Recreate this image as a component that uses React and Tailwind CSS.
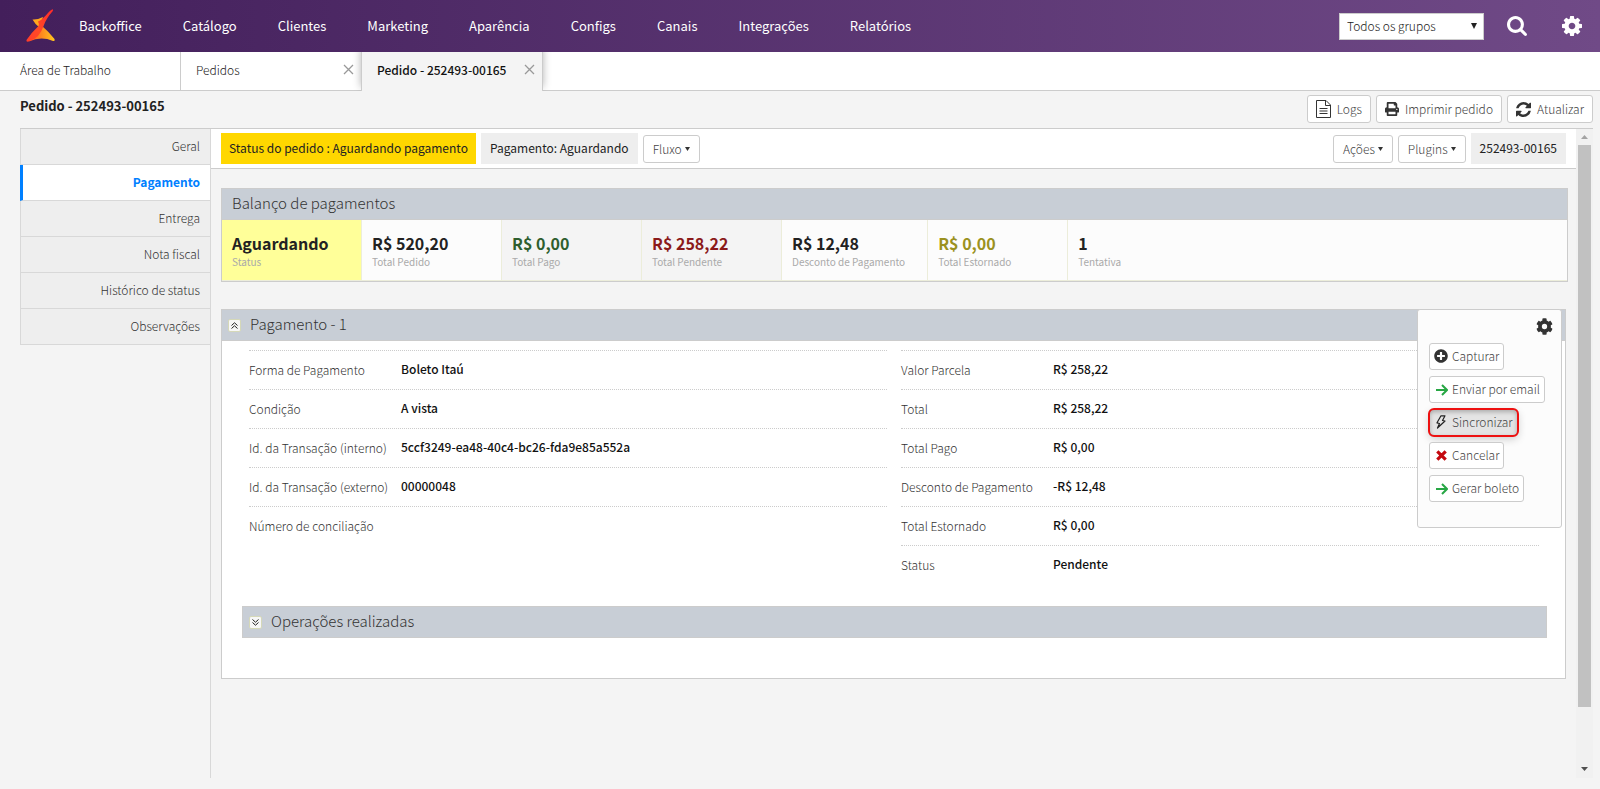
import React from "react";
import { FaPrint, FaPlusCircle } from "react-icons/fa";

const NAV = ["Backoffice", "Catálogo", "Clientes", "Marketing", "Aparência", "Configs", "Canais", "Integrações", "Relatórios"];

const SECTIONS = ["Geral", "Pagamento", "Entrega", "Nota fiscal", "Histórico de status", "Observações"];

const BALANCE = [
  { value: "Aguardando", label: "Status", cell: "bg-[#ffff99]", color: "text-[#222]" },
  { value: "R$ 520,20", label: "Total Pedido", cell: "", color: "text-[#222]" },
  { value: "R$ 0,00", label: "Total Pago", cell: "bg-[#f4f4f4]", color: "text-[#2e5e2e]" },
  { value: "R$ 258,22", label: "Total Pendente", cell: "bg-[#f4f4f4]", color: "text-[#8b1a1a]" },
  { value: "R$ 12,48", label: "Desconto de Pagamento", cell: "", color: "text-[#222]" },
  { value: "R$ 0,00", label: "Total Estornado", cell: "", color: "text-[#9b9120]" },
  { value: "1", label: "Tentativa", cell: "border-r-0", color: "text-[#222]" },
];

const DETAILS = [
  ["Forma de Pagamento", "Boleto Itaú"],
  ["Condição", "A vista"],
  ["Id. da Transação (interno)", "5ccf3249-ea48-40c4-bc26-fda9e85a552a"],
  ["Id. da Transação (externo)", "00000048"],
  ["Número de conciliação", ""],
];

const AMOUNTS = [
  ["Valor Parcela", "R$ 258,22"],
  ["Total", "R$ 258,22"],
  ["Total Pago", "R$ 0,00"],
  ["Desconto de Pagamento", "-R$ 12,48"],
  ["Total Estornado", "R$ 0,00"],
  ["Status", "Pendente"],
];

function Logo() {
  return (
    <svg viewBox="0 0 30 34" className="h-[34px] w-[30px]" aria-hidden="true">
      <defs>
        <linearGradient id="ribbon" x1="1" y1="0" x2="0" y2="1">
          <stop offset="0" stopColor="#ff2a2a" />
          <stop offset="0.6" stopColor="#ff4a26" />
          <stop offset="1" stopColor="#ff3b2a" />
        </linearGradient>
        <linearGradient id="base" x1="0" y1="0" x2="1" y2="0">
          <stop offset="0" stopColor="#ff4a26" />
          <stop offset="0.5" stopColor="#ff8a1e" />
          <stop offset="1" stopColor="#ffc81e" />
        </linearGradient>
      </defs>
      <path d="M6.500 10.500Q11 11 17 8L14 19Q9.500 16 6.500 10.500Z" fill="#ffa81e" />
      <path d="M15 16Q22 22 28.500 30Q29.500 32.500 27 32Q15 27 3 32.500Z" fill="url(#base)" />
      <path d="M26.500 .3Q24 1.500 22 4Q16 11 12 12.500Q13.500 15 12.500 17Q6 23 .5 31Q0 33 2 32.800Q8 31 12 27Q16 22 18 16Q20.500 9 26.800 2Q27.500 .5 26.500 .3Z" fill="url(#ribbon)" />
    </svg>
  );
}

function SearchIcon() {
  return (
    <svg viewBox="0 128 1664 1664" className="size-5" fill="currentColor" aria-hidden="true">
      <path d="M1152 832q0-185-131.500-316.500t-316.500-131.500-316.500 131.500-131.500 316.500 131.500 316.500 316.500 131.500 316.500-131.500 131.500-316.500zm512 832q0 52-38 90t-90 38q-54 0-90-38l-343-342q-179 124-399 124-143 0-273.500-55.500t-225-150-150-225-55.500-273.500 55.500-273.500 150-225 225-150 273.500-55.500 273.500 55.500 225 150 150 225 55.500 273.500q0 220-124 399l343 343q37 37 37 90z" />
    </svg>
  );
}

function CogIcon() {
  return (
    <svg viewBox="0 128 1536 1536" className="size-5" fill="currentColor" aria-hidden="true">
      <path d="M1024 896q0-106-75-181t-181-75-181 75-75 181 75 181 181 75 181-75 75-181zm512-109v222q0 12-8 23t-20 13l-185 28q-19 54-39 91 35 50 107 138 10 12 10 25t-9 23q-27 37-99 108t-94 71q-12 0-26-9l-138-108q-44 23-91 38-16 136-29 186-7 28-36 28h-222q-14 0-24.500-8.500t-11.500-21.500l-28-184q-49-16-90-37l-141 107q-10 9-25 9-14 0-25-11-126-114-165-168-7-10-7-23 0-12 8-23 15-21 51-66.500t54-70.500q-27-50-41-99l-183-27q-13-2-21-12.500t-8-23.500v-222q0-12 8-23t19-13l186-28q14-46 39-92-40-57-107-138-10-12-10-24 0-10 9-23 26-36 98.500-107.500t94.500-71.500q13 0 26 10l138 107q44-23 91-38 16-136 29-186 7-28 36-28h222q14 0 24.500 8.500t11.500 21.500l28 184q49 16 90 37l142-107q9-9 24-9 13 0 25 10 129 119 165 170 7 8 7 22 0 12-8 23-15 21-51 66.500t-54 70.500q26 50 41 98l183 28q13 2 21 12.500t8 23.500z" />
    </svg>
  );
}

function GearIcon() {
  return (
    <svg viewBox="0 0 512 512" className="size-[17px]" fill="currentColor" aria-hidden="true">
      <path d="M487 316l-42-25c4-23 4-47 0-70l42-25c5-3 7-9 6-14-11-36-30-68-55-95-4-4-10-5-15-2l-42 25c-18-16-39-28-61-35V26c0-6-4-11-9-12-36-8-74-8-110 0-5 1-9 6-9 12v49c-22 8-43 20-61 35L89 85c-5-3-11-2-15 2-25 27-44 59-55 95-2 5 1 11 6 14l42 25c-4 23-4 47 0 70l-42 25c-5 3-7 9-6 14 11 36 30 68 55 95 4 4 10 5 15 2l42-25c18 16 39 28 61 35v49c0 6 4 11 9 12 36 8 74 8 110 0 5-1 9-6 9-12v-49c22-8 43-20 61-35l42 25c5 3 11 2 15-2 25-27 44-59 55-95 2-5-1-11-6-14zM256 336a80 80 0 1 1 0-160 80 80 0 0 1 0 160z" />
    </svg>
  );
}

function FileIcon() {
  return (
    <svg viewBox="0 0 15 18" className="h-[18px] w-[15px]" fill="none" stroke="#333" aria-hidden="true">
      <path d="M.5 .5H10L14.500 5V17.500H.5Z" />
      <path d="M9.500 .5V5.500H14.500" />
      <path d="M3.500 8.500H11.500M3.500 11H11.500M3.500 13.500H11.500" />
    </svg>
  );
}

function RefreshIcon() {
  return (
    <svg viewBox="0 128 1536 1536" className="size-[15px]" fill="#333" aria-hidden="true">
      <path d="M1511 1056q0 5-1 7-64 268-268 434.500t-478 166.500q-146 0-282.500-55t-243.500-157l-129 129q-19 19-45 19t-45-19-19-45v-448q0-26 19-45t45-19h448q26 0 45 19t19 45-19 45l-137 137q71 66 161 102t187 36q134 0 250-65t186-179q11-17 53-117 8-23 30-23h192q13 0 22.500 9.500t9.500 22.500zm25-800v448q0 26-19 45t-45 19h-448q-26 0-45-19t-19-45 19-45l138-138q-148-137-349-137-134 0-250 65t-186 179q-11 17-53 117-8 23-30 23h-199q-13 0-22.500-9.500t-9.500-22.500v-7q65-268 270-434.500t480-166.500q146 0 284 55.500t245 156.500l130-129q19-19 45-19t45 19 19 45z" />
    </svg>
  );
}

function ArrowIcon() {
  return (
    <svg viewBox="0 0 14 14" className="size-[14px]" fill="none" stroke="#28a745" strokeWidth="2" aria-hidden="true">
      <path d="M2 8H13M8 3L13 8L8 13" />
    </svg>
  );
}

function BoltIcon() {
  return (
    <svg viewBox="0 0 10 14" className="h-[14px] w-[10px]" fill="none" stroke="#222" strokeWidth="1.200" strokeLinejoin="round" aria-hidden="true">
      <path d="M5 .8H9L6.500 5.500L9 6L1.500 13L3.500 8.500L1 7.800Z" />
    </svg>
  );
}

function CrossIcon() {
  return (
    <svg viewBox="0 0 11 11" className="size-[11px]" fill="none" stroke="#c4090f" strokeWidth="3.200" aria-hidden="true">
      <path d="M1.300 1.300L9.700 9.700M9.700 1.300L1.300 9.700" />
    </svg>
  );
}

function CloseIcon() {
  return (
    <svg viewBox="0 0 11 11" className="size-[11px]" fill="none" stroke="#999" strokeWidth="1.300" aria-hidden="true">
      <path d="M1 1L10 10M10 1L1 10" />
    </svg>
  );
}

function Caret() {
  return (
    <svg viewBox="0 0 5 4" className="h-1 w-[5px]" fill="#333" aria-hidden="true">
      <path d="M0 0H5L2.500 4Z" />
    </svg>
  );
}

function ToolButton({ children, className = "gap-[6px] px-2" }) {
  return (
    <button type="button" className={"flex h-7 items-center rounded-[3px] border border-[#ccc] bg-white font-light text-[#444] " + className}>
      {children}
    </button>
  );
}

function MenuButton({ children }) {
  return (
    <ToolButton className="gap-[3px] px-[9px]">
      {children}
      <Caret />
    </ToolButton>
  );
}

function Chip({ children, className = "bg-[#eee] px-[9px]" }) {
  return <span className={"flex h-[31px] items-center pb-px " + className}>{children}</span>;
}

function ActionButton({ icon, children, active }) {
  return (
    <button
      type="button"
      className={
        "flex h-[27px] items-center border pr-1 pb-px font-light text-[#444] " +
        (active
          ? "rounded-[5px] border-[#aaa] bg-[#e4e4e4] shadow-[inset_0_2px_4px_rgba(0,0,0,0.25),0_3px_8px_rgba(0,0,0,0.2)] outline-2 -outline-offset-1 outline-[#ee1111]"
          : "rounded-[3px] border-[#ccc] bg-white")
      }
    >
      <span className="flex w-[22px] items-center justify-center">{icon}</span>
      {children}
    </button>
  );
}

function PanelHeader({ children, className = "h-[31px] border-b" }) {
  return <div className={"flex items-center border-[#ccc] bg-[#c8ced6] pl-[6px] text-[15px] font-light text-[#333] " + className}>{children}</div>;
}

function ToggleTitle({ open, label, children }) {
  return (
    <>
      <button type="button" aria-label={label} aria-expanded={open} className="flex size-[13px] items-center justify-center rounded-xs border border-[#d5d8b8] bg-[#f7f7f7]">
        <svg viewBox="0 0 7 7" className="size-[7px]" fill="none" stroke="#222" aria-hidden="true">
          {open ? <path d="M.5 3.500L3.500 .8L6.500 3.500M.5 6.500L3.500 3.800L6.500 6.500" /> : <path d="M.5 .5L3.500 3.200L6.500 .5M.5 3.500L3.500 6.200L6.500 3.500" />}
        </svg>
      </button>
      <h2 className="pb-[3px] pl-[9px]">{children}</h2>
    </>
  );
}

function Rows({ items }) {
  return (
    <dl className="min-w-0 flex-1">
      {items.map(([label, value]) => (
        <div key={label} className="flex h-[39px] items-center border-t border-dotted border-[#ccc] pb-[2px]">
          <dt className="w-[152px] shrink-0 pt-[2px] font-light text-[#333]">{label}</dt>
          <dd className="font-medium text-[#111]">{value}</dd>
        </div>
      ))}
    </dl>
  );
}

export default function App() {
  return (
    <div className="flex min-h-screen flex-col bg-[#f4f4f4] font-['Noto_Sans_CJK_SC',sans-serif] text-[12px] leading-5 text-[#222]">
      <header className="flex h-[52px] items-center bg-linear-to-r from-[#431f5b] to-[#704a87] pr-[18px] pl-[26px] text-white">
        <a href="#inicio" aria-label="Início">
          <Logo />
        </a>
        <nav className="ml-[23px] flex gap-[41px] text-[13px]">
          {NAV.map((item) => (
            <a key={item} href={"#" + item}>{item}</a>
          ))}
        </nav>
        <div className="ml-auto flex items-center">
          <div className="relative">
            <select aria-label="Grupo" defaultValue="todos" className="h-[27px] w-[145px] appearance-none border border-[#ccc] bg-white pl-[7px] font-light text-[#222]">
              <option value="todos">Todos os grupos</option>
            </select>
            <svg viewBox="0 0 6 6" className="pointer-events-none absolute top-[10px] right-[7px] size-[6px]" fill="#222" aria-hidden="true">
              <path d="M0 0H6L3 6Z" />
            </svg>
          </div>
          <button type="button" aria-label="Buscar" className="ml-[23px]"><SearchIcon /></button>
          <button type="button" aria-label="Configurações" className="ml-[35px]"><CogIcon /></button>
        </div>
      </header>

      <div className="flex h-[39px] border-b border-[#ccc] bg-white">
        <a href="#area" className="flex w-[181px] items-center border-r border-[#ccc] pb-[2px] pl-5 font-light">Área de Trabalho</a>
        <div className="flex w-[180px] items-center justify-between pr-[7px] pb-[2px] pl-[15px]">
          <a href="#pedidos" className="font-light">Pedidos</a>
          <button type="button" aria-label="Fechar Pedidos" className="pb-[2px]"><CloseIcon /></button>
        </div>
        <div className="-mb-px flex w-[182px] items-center justify-between border-x border-[#ccc] bg-[#f4f4f4] pr-[7px] pb-[3px] pl-[15px] shadow-[0_-4px_8px_rgba(0,0,0,0.3)] [clip-path:inset(0_-12px_0_-12px)]">
          <a href="#pedido" className="font-medium text-[#111]">Pedido - 252493-00165</a>
          <button type="button" aria-label="Fechar Pedido" className="pb-[2px]"><CloseIcon /></button>
        </div>
      </div>

      <main className="flex flex-1 flex-col pr-[7px] pb-[11px] pl-5">
        <div className="flex h-[37px] items-start justify-between pt-1">
          <h1 className="pt-px text-[13px] font-bold">Pedido - 252493-00165</h1>
          <div className="flex gap-[5px]">
            <ToolButton><FileIcon />Logs</ToolButton>
            <ToolButton><FaPrint className="size-[14px] text-[#333]" />Imprimir pedido</ToolButton>
            <ToolButton><RefreshIcon />Atualizar</ToolButton>
          </div>
        </div>

        <div className="flex flex-1 border-t border-[#ccc]">
          <nav className="flex w-[191px] shrink-0 flex-col border-r border-[#d8d8d8]">
            {SECTIONS.map((name) => (
              <a
                key={name}
                href={"#" + name}
                className={
                  "flex h-9 items-center justify-end border-b border-[#d8d8d8] pr-[10px] pb-[2px] " +
                  (name === "Pagamento" ? "border-l-3 border-l-[#0080ff] bg-white font-bold text-[#0080ff]" : "border-l bg-[#eee] font-light text-[#333]")
                }
              >
                {name}
              </a>
            ))}
          </nav>

          <div className="flex min-w-0 flex-1 flex-col">
            <div className="flex h-10 items-center gap-[5px] border-b border-[#ccc] bg-white px-[10px]">
              <Chip className="bg-[#ffd700] px-2">Status do pedido : Aguardando pagamento</Chip>
              <Chip>Pagamento: Aguardando</Chip>
              <MenuButton>Fluxo</MenuButton>
              <div className="ml-auto flex items-center gap-[5px]">
                <MenuButton>Ações</MenuButton>
                <MenuButton>Plugins</MenuButton>
                <Chip>252493-00165</Chip>
              </div>
            </div>

            <section className="mt-[19px] mr-2 ml-[10px] border border-[#ccc] bg-[#fcfcfc]">
              <PanelHeader><h2 className="pb-[3px] pl-1">Balanço de pagamentos</h2></PanelHeader>
              <div className="flex h-[61px] border-b border-[#ecedda]">
                {BALANCE.map((b) => (
                  <div key={b.label} className={"flex min-w-[140px] flex-col justify-center border-r border-[#ecedda] pr-[22px] pl-[10px] " + b.cell}>
                    <strong className={"text-[16px] leading-6 font-bold " + b.color}>{b.value}</strong>
                    <span className="text-[10px] leading-[14px] text-[#aaa]">{b.label}</span>
                  </div>
                ))}
              </div>
            </section>

            <section className="relative mt-[27px] mr-[10px] ml-[10px] border border-[#ccc] bg-white pb-10">
              <PanelHeader><ToggleTitle open label="Recolher pagamento">Pagamento - 1</ToggleTitle></PanelHeader>
              <div className="flex gap-[14px] pt-[9px] pr-[26px] pl-[27px]">
                <Rows items={DETAILS} />
                <Rows items={AMOUNTS} />
              </div>
              <PanelHeader className="mt-[22px] mr-[18px] ml-5 h-8 border"><ToggleTitle open={false} label="Expandir operações">Operações realizadas</ToggleTitle></PanelHeader>

              <div className="absolute -top-px right-[3px] flex w-[145px] flex-col items-start gap-[6px] rounded-[3px] border border-[#ccc] bg-[#fcfcfc] pt-2 pb-[25px] pl-[11px]">
                <button type="button" aria-label="Opções" className="mr-2 mb-[2px] self-end text-[#333]"><GearIcon /></button>
                <ActionButton icon={<FaPlusCircle className="size-[14px] text-[#333]" />}>Capturar</ActionButton>
                <ActionButton icon={<ArrowIcon />}>Enviar por email</ActionButton>
                <ActionButton active icon={<BoltIcon />}>Sincronizar</ActionButton>
                <ActionButton icon={<CrossIcon />}>Cancelar</ActionButton>
                <ActionButton icon={<ArrowIcon />}>Gerar boleto</ActionButton>
              </div>
            </section>
          </div>

          <div className="flex w-[17px] shrink-0 flex-col items-center bg-[#f1f1f1]" aria-hidden="true">
            <svg viewBox="0 0 17 16" className="h-4 w-[17px]" fill="#a3a3a3"><path d="M5 10L8.500 6L12 10Z" /></svg>
            <div className="w-[13px] flex-[562] bg-[#c1c1c1]" />
            <div className="flex-[54]" />
            <svg viewBox="0 0 17 17" className="size-[17px]" fill="#505050"><path d="M5 6L8.500 10L12 6Z" /></svg>
          </div>
        </div>
      </main>
    </div>
  );
}
